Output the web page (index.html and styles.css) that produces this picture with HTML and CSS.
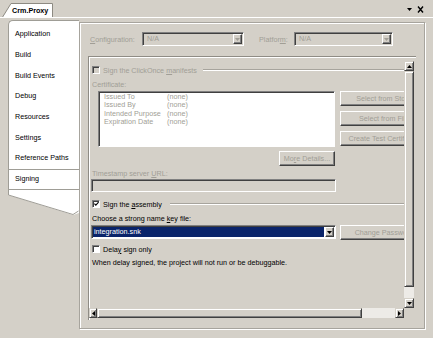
FILE: index.html
```html
<!DOCTYPE html>
<html lang="en">
<head>
    <meta charset="UTF-8">
    <title>Crm.Proxy - Signing</title>
    <link rel="stylesheet" href="styles.css">
</head>
<body>
    <div class="doc-tabs">
        <div class="doc-tab">
            <svg class="doc-tab-shape" width="52" height="15" viewBox="0 0 52 15">
                <polygon points="0,15 9,0.5 50.5,0.5 50.5,15" fill="#fff" stroke="#8d8a82" stroke-width="1"/>
                <line x1="0" y1="14.5" x2="52" y2="14.5" stroke="#fff"/>
            </svg>
            <span class="doc-tab-title">Crm.Proxy</span>
        </div>
        <div class="doc-tools">
            <svg width="20" height="8" viewBox="0 0 20 8">
                <polygon points="0,2 5,2 2.5,5" fill="#000"/>
                <path d="M11 0.5 L16 6.5 M16 0.5 L11 6.5" stroke="#000" stroke-width="1.4"/>
            </svg>
        </div>
    </div>

    <div class="doc-body">
        <div class="nav">
            <ul class="nav-list">
                <li>Application</li>
                <li>Build</li>
                <li>Build Events</li>
                <li>Debug</li>
                <li>Resources</li>
                <li>Settings</li>
                <li>Reference Paths</li>
                <li class="active">Signing</li>
            </ul>
            <svg class="nav-tail" width="71" height="26" viewBox="0 0 71 26">
                <polygon points="0,0 71,0 71,23 65,25 0,5" fill="#fff"/>
                <polyline points="0.5,0 0.5,5 65,24.5 70.5,21" fill="none" stroke="#9f9d96"/>
            </svg>
        </div>

        <div class="page">
            <div class="config-row">
                <span class="cfg-label disabled"><u>C</u>onfiguration:</span>
                <div class="combo disabled config-combo">
                    <span class="combo-text">N/A</span>
                    <span class="combo-btn"><svg width="5" height="3" viewBox="0 0 5 3"><polygon points="0,0 5,0 2.5,3" fill="#a19e96"/></svg></span>
                </div>
                <span class="cfg-label platform-label disabled">Platfor<u>m</u>:</span>
                <div class="combo disabled platform-combo">
                    <span class="combo-text">N/A</span>
                    <span class="combo-btn"><svg width="5" height="3" viewBox="0 0 5 3"><polygon points="0,0 5,0 2.5,3" fill="#a19e96"/></svg></span>
                </div>
            </div>

            <div class="scroll-box">
                <div class="scroll-main">
                    <div class="scroll-content">
                        <div class="check-row row-clickonce disabled">
                            <span class="checkbox checkbox-off"></span>
                            <span>Sign the ClickOnce <u>m</u>anifests</span>
                            <span class="groove"></span>
                        </div>

                        <div class="field-label label-cert disabled">Certificate:</div>

                        <div class="cert-row">
                            <div class="cert-list">
                                <div class="cert-line"><span class="cert-key">Issued To</span><span>(none)</span></div>
                                <div class="cert-line"><span class="cert-key">Issued By</span><span>(none)</span></div>
                                <div class="cert-line"><span class="cert-key">Intended Purpose</span><span>(none)</span></div>
                                <div class="cert-line"><span class="cert-key">Expiration Date</span><span>(none)</span></div>
                            </div>
                            <div class="cert-buttons">
                                <div class="btn disabled">Select from Store...</div>
                                <div class="btn disabled">Select from File...</div>
                                <div class="btn disabled">Create Test Certificate...</div>
                            </div>
                        </div>

                        <div class="details-row">
                            <div class="btn btn-details disabled">Mo<u>r</u>e Details...</div>
                        </div>

                        <div class="field-label label-stamp disabled">Timestamp server <u>U</u>RL:</div>
                        <div class="textbox"></div>

                        <div class="check-row row-assembly">
                            <span class="checkbox">
                                <svg width="6" height="6" viewBox="0 0 6 6"><path d="M0.5 2.5 L2.2 4.4 L5.5 0.8" fill="none" stroke="#000" stroke-width="1.3"/></svg>
                            </span>
                            <span>Sign the <u>a</u>ssembly</span>
                            <span class="groove"></span>
                        </div>

                        <div class="field-label label-key">Choose a strong name <u>k</u>ey file:</div>

                        <div class="key-row">
                            <div class="combo key-combo">
                                <span class="combo-text combo-selected">integration.snk</span>
                                <span class="combo-btn"><svg width="5" height="3" viewBox="0 0 5 3"><polygon points="0,0 5,0 2.5,3" fill="#000"/></svg></span>
                            </div>
                            <div class="btn btn-password disabled">Change Password...</div>
                        </div>

                        <div class="check-row row-delay">
                            <span class="checkbox"></span>
                            <span>Dela<u>y</u> sign only</span>
                        </div>

                        <div class="field-label label-note">When delay signed, the project will not run or be debuggable.</div>
                    </div>

                    <div class="vscroll">
                        <div class="sb-btn sb-btn-v"><svg width="5" height="3" viewBox="0 0 5 3"><polygon points="0,3 5,3 2.5,0" fill="#000"/></svg></div>
                        <div class="sb-thumb vthumb"></div>
                        <div class="sb-track"></div>
                        <div class="sb-btn sb-btn-v"><svg width="5" height="3" viewBox="0 0 5 3"><polygon points="0,0 5,0 2.5,3" fill="#000"/></svg></div>
                    </div>
                </div>

                <div class="hscroll-row">
                    <div class="hscroll">
                        <div class="sb-btn sb-btn-left"><svg width="3" height="5" viewBox="0 0 3 5"><polygon points="3,0 3,5 0,2.5" fill="#000"/></svg></div>
                        <div class="sb-thumb hthumb"></div>
                        <div class="sb-track"></div>
                        <div class="sb-btn sb-btn-right"><svg width="3" height="5" viewBox="0 0 3 5"><polygon points="0,0 0,5 3,2.5" fill="#000"/></svg></div>
                    </div>
                    <div class="sb-corner"></div>
                </div>
            </div>
        </div>
    </div>
</body>
</html>
```

FILE: styles.css
```css
* {
    box-sizing: border-box;
}

html, body {
    margin: 0;
    padding: 0;
}

body {
    width: 433px;
    height: 338px;
    overflow: hidden;
    background-color: #d4d0c8;
    font-family: 'Liberation Sans', Arial, sans-serif;
    font-size: 7.2px;
    color: #000;
}

u {
    text-decoration: underline;
    text-underline-offset: 1px;
}

.disabled {
    color: #a19e96;
}

/* Document tab strip */
.doc-tabs {
    height: 18px;
    display: flex;
    align-items: flex-end;
    padding-left: 2px;
    border-bottom: 1px solid #fff;
}

.doc-tab {
    position: relative;
    width: 52px;
    height: 15px;
    margin-bottom: -1px;
}

.doc-tab-shape {
    position: absolute;
    left: 0;
    top: 0;
}

.doc-tab-title {
    position: relative;
    display: block;
    padding-left: 10px;
    line-height: 15px;
    font-weight: bold;
}

.doc-tools {
    margin-left: auto;
    margin-right: 6px;
    align-self: center;
    display: flex;
    padding-top: 2px;
}

/* Body */
.doc-body {
    display: flex;
    align-items: flex-start;
    height: 320px;
    padding: 2px 0 0 8px;
}

.nav {
    width: 71px;
    display: flex;
    flex-direction: column;
}

.nav-list {
    list-style: none;
    margin: 0;
    padding: 3.2px 0 0 0;
    background-color: #fff;
    border-left: 1px solid #9f9d96;
    border-top: 1px solid #9f9d96;
    border-top-left-radius: 5px;
}

.nav-list li {
    height: 20.7px;
    line-height: 20.7px;
    padding-left: 6px;
    white-space: nowrap;
}

.nav-list li.active {
    border-top: 1px solid #9f9d96;
    border-bottom: 1px solid #9f9d96;
    line-height: 18.7px;
}

.nav-tail {
    display: block;
}

.page {
    width: 346px;
    height: 307px;
    margin-top: 2px;
    padding: 9px 8px 0 8px;
    border: 1px solid #a7a49d;
    box-shadow: inset 1px 1px 0 #fff, 1px 1px 0 #fff;
}

/* Configuration row */
.config-row {
    display: flex;
    align-items: center;
    height: 14px;
    padding-left: 2px;
}

.cfg-label {
    width: 52px;
}

.platform-label {
    width: 35px;
    margin-left: 15px;
}

.combo {
    display: flex;
    height: 14px;
    background-color: #fff;
    border: 1px solid;
    border-color: #808080 #fff #fff #808080;
    box-shadow: inset 1px 1px 0 #404040;
    padding: 1px 1px 1px 1px;
}

.combo.disabled {
    background-color: #d4d0c8;
}

.config-combo {
    width: 102px;
}

.platform-combo {
    width: 99px;
}

.combo-text {
    flex: 1;
    line-height: 10px;
    padding-left: 3px;
    white-space: nowrap;
}

.combo-selected {
    background-color: #0a246a;
    color: #fff;
    padding-left: 1px;
}

.combo-btn {
    width: 9px;
    height: 10px;
    margin-left: 1px;
    background-color: #d4d0c8;
    border: 1px solid;
    border-color: #fff #404040 #404040 #fff;
    box-shadow: inset -1px -1px 0 #808080;
    display: flex;
    align-items: center;
    justify-content: center;
}

/* Scroll area */
.scroll-box {
    height: 264px;
    margin-top: 10px;
    padding: 4px 2px 0 0;
    border-top: 1px solid #8f8c85;
    border-left: 1px solid #8f8c85;
    box-shadow: inset 1px 1px 0 #fff;
}

.scroll-main {
    display: flex;
    height: 247px;
}

.scroll-content {
    flex: 1;
    overflow: hidden;
    padding-left: 3px;
    display: flex;
    flex-direction: column;
}

.check-row {
    display: flex;
    align-items: center;
    height: 10px;
    flex-shrink: 0;
    white-space: nowrap;
}

.checkbox {
    width: 8px;
    height: 8px;
    margin-right: 3px;
    background-color: #fff;
    border: 1px solid;
    border-color: #808080 #fff #fff #808080;
    box-shadow: inset 1px 1px 0 #404040;
    display: flex;
    align-items: center;
    justify-content: center;
    flex-shrink: 0;
}

.checkbox svg {
    margin: 0 0 0 1px;
}

.checkbox-off {
    background-color: #d4d0c8;
}

.groove {
    flex: 1;
    height: 2px;
    margin-left: 6px;
    border-top: 1px solid #a7a49d;
    border-bottom: 1px solid #fff;
}

.row-clickonce {
    margin-top: 4px;
}

.row-assembly {
    margin-top: 7px;
}

.row-assembly .groove {
    margin-left: 8px;
}

.row-delay {
    margin-top: 4px;
}

.field-label {
    height: 9px;
    line-height: 9px;
    white-space: nowrap;
    flex-shrink: 0;
}

.label-cert {
    margin-top: 5px;
}

.label-stamp {
    margin-top: 3px;
}

.label-key {
    margin-top: 5px;
}

.label-note {
    margin-top: 4px;
}

.cert-row {
    display: flex;
    margin-top: 2px;
    padding-left: 6px;
    flex-shrink: 0;
}

.cert-list {
    width: 237px;
    height: 56px;
    flex-shrink: 0;
    background-color: #fff;
    border: 1px solid;
    border-color: #808080 #fff #fff #808080;
    box-shadow: inset 1px 1px 0 #404040;
    padding: 1px 0 0 5px;
    color: #a19e96;
}

.cert-line {
    display: flex;
    height: 8.3px;
    line-height: 8.3px;
    white-space: nowrap;
}

.cert-key {
    width: 63px;
}

.cert-buttons {
    display: flex;
    flex-direction: column;
    gap: 5px;
    margin-left: 5px;
    flex-shrink: 0;
}

.btn {
    width: 94px;
    height: 15px;
    line-height: 13px;
    text-align: center;
    white-space: nowrap;
    background-color: #d4d0c8;
    border: 1px solid;
    border-color: #fff #404040 #404040 #fff;
    box-shadow: inset -1px -1px 0 #808080;
    flex-shrink: 0;
}

.details-row {
    display: flex;
    justify-content: flex-end;
    width: 243px;
    margin-top: 4px;
    flex-shrink: 0;
}

.btn-details {
    width: 56px;
}

.textbox {
    width: 245px;
    height: 13px;
    margin-top: 1px;
    margin-left: -1px;
    flex-shrink: 0;
    background-color: #d4d0c8;
    border: 1px solid;
    border-color: #808080 #fff #fff #808080;
    box-shadow: inset 1px 1px 0 #404040;
}

.key-row {
    display: flex;
    align-items: flex-start;
    height: 15px;
    margin-top: 2px;
    margin-left: -1px;
    flex-shrink: 0;
}

.key-combo {
    width: 245px;
    flex-shrink: 0;
}

.btn-password {
    margin-left: 4px;
}

/* Scrollbars */
.vscroll {
    width: 10px;
    display: flex;
    flex-direction: column;
}

.sb-btn {
    background-color: #d4d0c8;
    border: 1px solid;
    border-color: #d4d0c8 #404040 #404040 #d4d0c8;
    box-shadow: inset 1px 1px 0 #fff, inset -1px -1px 0 #808080;
    display: flex;
    align-items: center;
    justify-content: center;
    flex-shrink: 0;
}

.sb-btn-v {
    height: 10px;
}

.sb-thumb {
    background-color: #d4d0c8;
    border: 1px solid;
    border-color: #d4d0c8 #404040 #404040 #d4d0c8;
    box-shadow: inset 1px 1px 0 #fff, inset -1px -1px 0 #808080;
    flex-shrink: 0;
}

.vthumb {
    height: 216px;
}

.sb-track {
    flex: 1;
    background-color: #edebe7;
}

.hscroll-row {
    display: flex;
    height: 10px;
}

.hscroll {
    flex: 1;
    display: flex;
}

.sb-btn-left {
    width: 8px;
}

.sb-btn-right {
    width: 9px;
}

.hthumb {
    width: 265px;
}

.sb-corner {
    width: 10px;
    background-color: #d4d0c8;
}
```
